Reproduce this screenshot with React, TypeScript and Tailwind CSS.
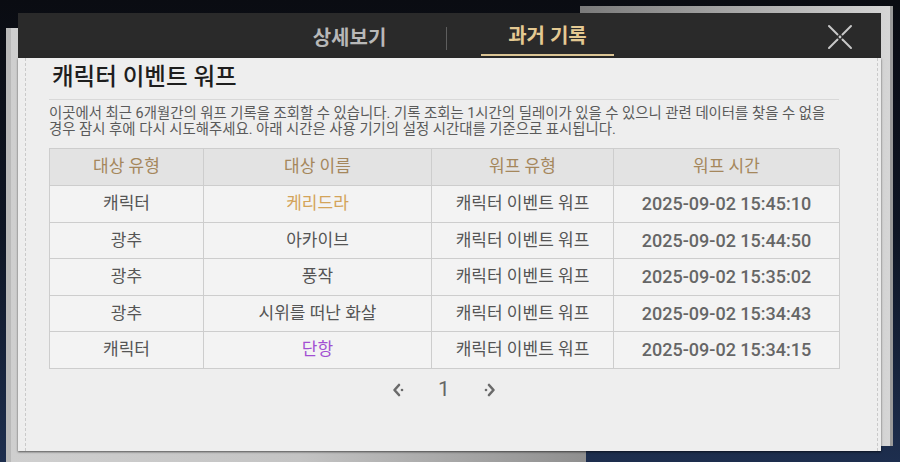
import React from 'react';

type Row = {
  kind: string;
  name: string;
  tone?: 'gold' | 'purple';
  warp: string;
  time: string;
};

const rows: Row[] = [
  { kind: '캐릭터', name: '케리드라', tone: 'gold', warp: '캐릭터 이벤트 워프', time: '2025-09-02 15:45:10' },
  { kind: '광추', name: '아카이브', warp: '캐릭터 이벤트 워프', time: '2025-09-02 15:44:50' },
  { kind: '광추', name: '풍작', warp: '캐릭터 이벤트 워프', time: '2025-09-02 15:35:02' },
  { kind: '광추', name: '시위를 떠난 화살', warp: '캐릭터 이벤트 워프', time: '2025-09-02 15:34:43' },
  { kind: '캐릭터', name: '단항', tone: 'purple', warp: '캐릭터 이벤트 워프', time: '2025-09-02 15:34:15' },
];

const headers = ['대상 유형', '대상 이름', '워프 유형', '워프 시간'];

const CloseIcon = () => (
  <svg width="26" height="26" viewBox="0 0 26 26" fill="none" stroke="#c9c9c9" strokeWidth="2" strokeLinecap="round">
    <line x1="2" y1="2" x2="10.5" y2="10.5" />
    <line x1="15.5" y1="15.5" x2="24" y2="24" />
    <line x1="24" y1="2" x2="15.5" y2="10.5" />
    <line x1="10.5" y1="15.5" x2="2" y2="24" />
    <circle cx="13" cy="13" r="1.4" fill="#c9c9c9" stroke="none" />
  </svg>
);

const Arrow = ({ dir }: { dir: 'left' | 'right' }) => (
  <svg width="16" height="16" viewBox="0 0 16 16" fill="none" stroke="#6a6a6a" strokeWidth="2.6" strokeLinecap="round" strokeLinejoin="round">
    {dir === 'left' ? (
      <>
        <polyline points="8,3 3.5,8 8,13" />
        <circle cx="11" cy="8" r="1.3" fill="#6a6a6a" stroke="none" />
      </>
    ) : (
      <>
        <polyline points="8,3 12.5,8 8,13" />
        <circle cx="5" cy="8" r="1.3" fill="#6a6a6a" stroke="none" />
      </>
    )}
  </svg>
);

const cell = 'h-[36.5px] flex items-center justify-center bg-[#f3f3f3] border-r border-b border-[#cdcdcd]';

export default function App() {
  const font = { fontFamily: 'Roboto, "Noto Sans CJK KR", sans-serif' };

  return (
    <div
      className="relative w-[900px] h-[462px] overflow-hidden bg-gradient-to-b from-[#0a0c12] via-[#0e1524] to-[#1d2e4e]"
      style={font}
    >
      {/* paper sheets stacked behind the dialog */}
      <div className="absolute left-[6px] top-[28px] w-[580px] h-[440px] bg-gradient-to-r from-[#cfcfcf] via-[#c4c4c4] to-[#8f8f8f] border-l-[5px] border-[#b9b9b9]" />
      <div className="absolute left-[580px] top-[6px] w-[313px] h-[440px] bg-gradient-to-r from-[#7a7a7a] to-[#d6d6d6] border-r-[3px] border-[#9a9a9a]" />

      <div className="relative ml-[18px] pt-[13px] w-[863px]">
        {/* header */}
        <div className="h-[45px] bg-[#2a2a2a] flex items-stretch pl-[265px] pr-[28px]">
          <div className="w-[133px] flex items-center justify-center pt-[5px] text-[20px] font-bold text-[#b8b8b8]">
            상세보기
          </div>
          <div className="ml-[30px] mt-[14px] w-px h-[23px] bg-[#5e5e5e]" />
          <div className="ml-[34px] w-[133px] flex items-center justify-center pt-[5px] border-b-2 border-[#dcc595] mb-[2px] text-[20px] font-bold text-[#e4c992]">
            과거 기록
          </div>
          <div className="ml-auto flex items-center pt-[3px]">
            <CloseIcon />
          </div>
        </div>

        {/* body */}
        <div className="h-[393px] bg-[#eeeeee] pl-[7px] pr-[3px] shadow-[0_1px_2px_rgba(0,0,0,0.6)]">
          <div className="h-full border-l border-r border-dashed border-[#cacaca] pl-[23px] pr-[38px]">
            <div className="pt-[4px] pb-[7px] border-b border-[#d8d8d8]">
              <h1 className="pl-[3px] text-[23.5px] leading-[30px] font-medium text-[#1e1e1e]">캐릭터 이벤트 워프</h1>
            </div>
            <p className="mt-[6px] text-[14.4px] leading-[16px] text-[#5a5a5a] whitespace-nowrap">
              이곳에서 최근 6개월간의 워프 기록을 조회할 수 있습니다. 기록 조회는 1시간의 딜레이가 있을 수 있으니 관련 데이터를 찾을 수 없을
              <br />
              경우 잠시 후에 다시 시도해주세요. 아래 시간은 사용 기기의 설정 시간대를 기준으로 표시됩니다.
            </p>

            <div className="mt-[10px] grid grid-cols-[154px_228px_182px_226px] border-l border-t border-[#cdcdcd] text-[17px]">
              {headers.map((h) => (
                <div
                  key={h}
                  className="h-[37px] flex items-center justify-center bg-[#e3e3e3] border-r border-b border-[#cdcdcd] text-[#a5875c]"
                >
                  {h}
                </div>
              ))}
              {rows.map((r, i) => (
                <React.Fragment key={i}>
                  <div className={cell + ' text-[#555555]'}>{r.kind}</div>
                  <div
                    className={
                      cell +
                      ' ' +
                      (r.tone === 'gold' ? 'text-[#d3a45a]' : r.tone === 'purple' ? 'text-[#a24fd2]' : 'text-[#555555]')
                    }
                  >
                    {r.name}
                  </div>
                  <div className={cell + ' text-[#555555]'}>{r.warp}</div>
                  <div className={cell + ' text-[18px] font-medium text-[#666666]'}>{r.time}</div>
                </React.Fragment>
              ))}
            </div>

            <div className="mt-[9px] flex items-center justify-center gap-[30px] h-[24px]">
              <Arrow dir="left" />
              <span className="text-[21px] text-[#666666] w-[14px] text-center">1</span>
              <Arrow dir="right" />
            </div>
          </div>
        </div>
      </div>
    </div>
  );
}
